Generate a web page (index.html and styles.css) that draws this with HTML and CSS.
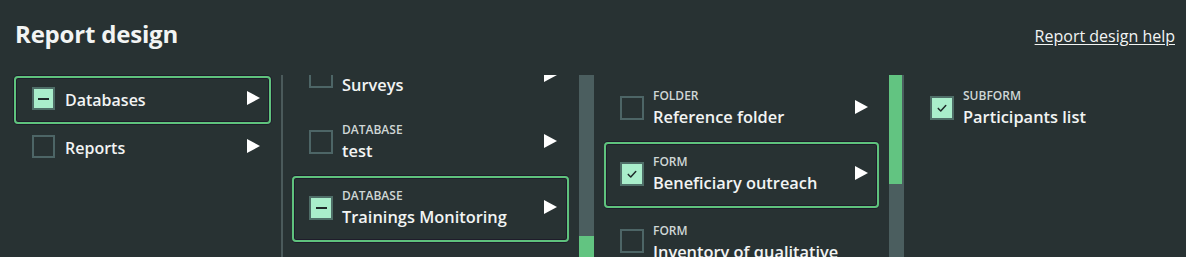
FILE: index.html
```html
<!DOCTYPE html>
<html lang="en">
<head>
<meta charset="utf-8">
<title>Report design</title>
<link rel="stylesheet" href="styles.css">
</head>
<body>
<div class="page">
  <header class="header">
    <h1 class="title">Report design</h1>
    <a class="help" href="#">Report design help</a>
  </header>
  <main class="main">
    <div class="col col1">
      <div class="item item-sm sel">
        <span class="box partial"><span class="dash"></span></span>
        <span class="text"><span class="name">Databases</span></span>
        <span class="arrow"></span>
      </div>
      <div class="item item-sm">
        <span class="box"></span>
        <span class="text"><span class="name">Reports</span></span>
        <span class="arrow"></span>
      </div>
    </div>
    <div class="divider"></div>
    <div class="col col2">
      <div class="viewport">
        <div class="list list-scrolled">
          <div class="item">
            <span class="box"></span>
            <span class="text"><span class="label">Database</span><span class="name">Surveys</span></span>
            <span class="arrow"></span>
          </div>
          <div class="item">
            <span class="box"></span>
            <span class="text"><span class="label">Database</span><span class="name">test</span></span>
            <span class="arrow"></span>
          </div>
          <div class="item sel">
            <span class="box partial"><span class="dash"></span></span>
            <span class="text"><span class="label">Database</span><span class="name">Trainings Monitoring</span></span>
            <span class="arrow"></span>
          </div>
        </div>
      </div>
      <div class="track"><div class="thumb thumb-bottom"></div></div>
    </div>
    <div class="col col3">
      <div class="viewport">
        <div class="list">
          <div class="item">
            <span class="box"></span>
            <span class="text"><span class="label">Folder</span><span class="name">Reference folder</span></span>
            <span class="arrow"></span>
          </div>
          <div class="item sel">
            <span class="box checked"><svg viewBox="0 0 24 24" width="20" height="20"><path d="M7.5 12.5l3 3 6-6.5" fill="none" stroke="#1f2a2a" stroke-width="1.8" stroke-linecap="round" stroke-linejoin="round"/></svg></span>
            <span class="text"><span class="label">Form</span><span class="name">Beneficiary outreach</span></span>
            <span class="arrow"></span>
          </div>
          <div class="item tall">
            <span class="box"></span>
            <span class="text"><span class="label">Form</span><span class="name">Inventory of qualitative</span></span>
            <span class="arrow"></span>
          </div>
        </div>
      </div>
      <div class="track"><div class="thumb thumb-top"></div></div>
    </div>
    <div class="col col4">
      <div class="item">
        <span class="box checked"><svg viewBox="0 0 24 24" width="20" height="20"><path d="M7.5 12.5l3 3 6-6.5" fill="none" stroke="#1f2a2a" stroke-width="1.8" stroke-linecap="round" stroke-linejoin="round"/></svg></span>
        <span class="text"><span class="label">Subform</span><span class="name">Participants list</span></span>
      </div>
    </div>
  </main>
</div>
</body>
</html>
```
FILE: styles.css
```css
* { box-sizing: border-box; }
html, body { margin: 0; height: 100%; }
body {
  background: #283233;
  color: #f2f4f3;
  font-family: "Open Sans", "Noto Sans", sans-serif;
  overflow: hidden;
}
.page {
  padding: 0 11px 0 14px;
  height: 257px;
  display: flex;
  flex-direction: column;
}
.header {
  height: 75px;
  flex: none;
  display: flex;
  justify-content: space-between;
  align-items: flex-start;
  padding-top: 17px;
}
.title {
  margin: 0 0 0 1px;
  font-size: 24px;
  line-height: 34px;
  font-weight: 700;
  letter-spacing: -0.2px;
}
.help {
  color: #f2f4f3;
  font-size: 16px;
  line-height: 22px;
  margin-top: 8px;
  text-decoration: underline;
  text-underline-offset: 2px;
}
.main {
  flex: 1;
  display: flex;
  min-height: 0;
}
.col { flex: none; }
.col1 { width: 257px; padding-top: 1px; }
.divider {
  width: 2px;
  background: #4b5a5b;
  margin: 0 9px 0 10px;
}
.col2, .col3 {
  display: flex;
  gap: 10px;
}
.col2 .viewport { width: 277px; }
.col3 { margin-left: 10px; }
.col3 .viewport { width: 275px; }
.viewport {
  overflow: hidden;
  height: 100%;
}
.list-scrolled { margin-top: -31px; }
.col3 .list { padding-top: 1px; }
.track {
  width: 15px;
  background: #4b5e5f;
  height: 100%;
  display: flex;
  flex-direction: column;
}
.thumb {
  background: #62c481;
  width: 100%;
}
.thumb-bottom { margin-top: auto; height: 21px; }
.thumb-top { height: 109px; width: 13px; }
.col4 { margin-left: 10px; width: 260px; padding-top: 1px; }

.item {
  display: flex;
  align-items: center;
  height: 66px;
  border: 2px solid transparent;
  border-radius: 4px;
  padding: 0 9px 0 15px;
}
.col2 .item { padding-right: 10px; }
.col3 .item { padding-left: 14px; }
.col4 .item { padding-left: 14px; }
.item-sm { height: 48px; padding-left: 16px; }
.item.sel {
  border-color: #5fc27d;
  box-shadow: 0 0 0 1px #1f1c2b, inset 0 0 0 1px #1f1c2b;
}
.item.tall {
  height: 110px;
  align-items: flex-start;
  padding-top: 13px;
}
.box {
  width: 24px;
  height: 24px;
  flex: none;
  border: 2px solid #4d6566;
  display: flex;
  align-items: center;
  justify-content: center;
  margin-bottom: 3px;
}
.tall .box { margin-top: 6px; }
.item-sm .box { width: 23px; height: 23px; }
.box.partial, .box.checked {
  background: #a9eecb;
  border-color: #4f6e68;
}
.dash {
  width: 11px;
  height: 2px;
  background: #1f2a2a;
}
.text {
  flex: 1;
  min-width: 0;
  margin-left: 9px;
  display: flex;
  flex-direction: column;
}
.item-sm .text { margin-left: 10px; }
.label {
  font-size: 12px;
  line-height: 16px;
  font-weight: 600;
  text-transform: uppercase;
  color: #cfd7d6;
}
.name {
  font-size: 16.4px;
  line-height: 26px;
  font-weight: 600;
  white-space: nowrap;
}
.item-sm .name { font-size: 16px; line-height: 22px; }
.arrow {
  flex: none;
  width: 0;
  height: 0;
  border-left: 13px solid #ffffff;
  border-top: 7px solid transparent;
  border-bottom: 7px solid transparent;
  margin-bottom: 5px;
}
.tall .arrow { margin-top: 40px; }
```
